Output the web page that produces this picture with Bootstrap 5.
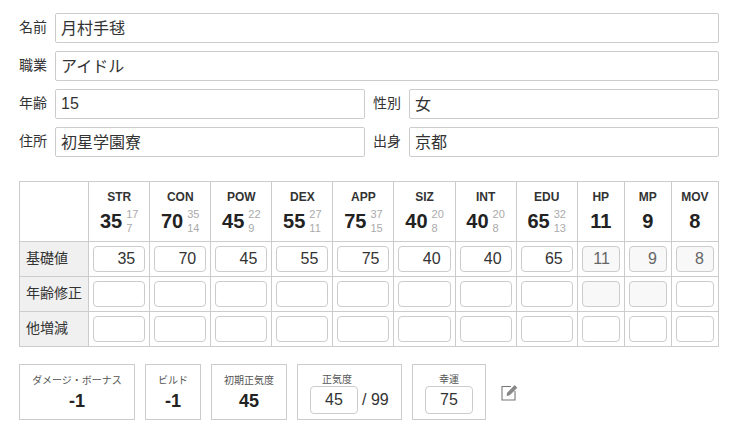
<!DOCTYPE html>
<html lang="ja">
<head>
    <meta charset="UTF-8">
    <meta name="viewport" content="width=device-width, initial-scale=1.0">
    <title>キャラクターシート</title>
    <link href="https://cdn.jsdelivr.net/npm/bootstrap@5.3.0/dist/css/bootstrap.min.css" rel="stylesheet">
    <style>
        body {
            font-family: "Liberation Sans", "Noto Sans CJK JP", sans-serif;
            font-size: 14px;
            color: #333;
            background: #fff;
        }
        .sheet {
            padding: 13px 16px 0 19px;
        }
        .field-row {
            display: flex;
            gap: 8px;
            margin-bottom: 8px;
        }
        .field-name {
            width: 28px;
            flex: none;
            font-size: 14px;
            line-height: 28px;
            white-space: nowrap;
        }
        .field-half {
            display: flex;
            gap: 8px;
            flex: 1 1 0;
        }
        .sheet .form-control {
            height: 30px;
            min-height: 0;
            padding: 0 5px;
            font-size: 16px;
            line-height: 26px;
            color: #333;
            border: 1px solid #ccc;
            border-radius: 2px;
            box-shadow: none;
        }
        .sheet .form-control.cjk-input {
            padding-bottom: 3px;
        }
        .stat-table {
            width: 700px;
            table-layout: fixed;
            border-collapse: collapse;
            margin: 24px 0 17px;
        }
        .stat-table th,
        .stat-table td {
            border: 1px solid #ccc;
            padding: 0;
        }
        .stat-head {
            height: 60px;
            text-align: center;
            vertical-align: top;
            padding-top: 8px !important;
        }
        .stat-code {
            font-size: 12px;
            font-weight: 700;
            line-height: 14px;
            color: #333;
        }
        .stat-nums {
            display: flex;
            justify-content: center;
            align-items: center;
            gap: 4px;
            margin-top: 3px;
            height: 28px;
        }
        .stat-value {
            font-size: 20px;
            font-weight: 700;
            line-height: 28px;
            color: #222;
        }
        .stat-sub {
            font-size: 11px;
            font-weight: 400;
            line-height: 14px;
            color: #aaa;
            text-align: left;
        }
        .stat-table .row-name {
            background: #f0f0f0;
            font-size: 14px;
            font-weight: 400;
            padding: 0 0 2px 6px;
            white-space: nowrap;
        }
        .stat-table td {
            height: 35px;
            padding: 4px;
        }
        .stat-table .form-control {
            display: block;
            height: 26px;
            width: 100%;
            padding: 0 9px 0 0;
            text-align: right;
            font-size: 16px;
            border-radius: 4px;
            line-height: 24px;
        }
        .stat-table .form-control:read-only {
            background: #f8f8f8;
            color: #666;
        }
        .derived-row {
            display: flex;
            align-items: center;
            gap: 10px;
        }
        .derived {
            height: 56px;
            border: 1px solid #ccc;
            text-align: center;
            flex: none;
        }
        .derived-label {
            font-size: 10px;
            line-height: 14px;
            color: #555;
            margin-top: 9px;
        }
        .derived-value {
            font-size: 18px;
            font-weight: 700;
            line-height: 20px;
            color: #222;
            margin-top: 3px;
        }
        .derived-label-tight {
            margin-top: 8px;
            line-height: 13px;
        }
        .derived-input {
            display: flex;
            align-items: center;
            gap: 4px;
            justify-content: flex-start;
            font-size: 16px;
        }
        .sheet .derived-input .form-control {
            width: 48px;
            height: 28px;
            padding: 0;
            text-align: center;
            border-radius: 4px;
            font-size: 16px;
            line-height: 26px;
        }
        .edit-link {
            display: block;
            width: 17px;
            height: 18px;
            margin: 0 0 5px 5px;
        }
    </style>
</head>
<body>
    <div class="sheet">
        <div class="field-row">
            <label class="field-name">名前</label>
            <input type="text" class="form-control cjk-input" value="月村手毬">
        </div>
        <div class="field-row">
            <label class="field-name">職業</label>
            <input type="text" class="form-control cjk-input" value="アイドル">
        </div>
        <div class="field-row">
            <div class="field-half">
                <label class="field-name">年齢</label>
                <input type="text" class="form-control" value="15">
            </div>
            <div class="field-half">
                <label class="field-name">性別</label>
                <input type="text" class="form-control cjk-input" value="女">
            </div>
        </div>
        <div class="field-row">
            <div class="field-half">
                <label class="field-name">住所</label>
                <input type="text" class="form-control cjk-input" value="初星学園寮">
            </div>
            <div class="field-half">
                <label class="field-name">出身</label>
                <input type="text" class="form-control cjk-input" value="京都">
            </div>
        </div>

        <table class="stat-table">
            <colgroup id="statCols"></colgroup>
            <thead><tr id="statHead"></tr></thead>
            <tbody id="statBody"></tbody>
        </table>

        <div class="derived-row">
            <div class="derived" style="width: 116px">
                <div class="derived-label">ダメージ・ボーナス</div>
                <div class="derived-value">-1</div>
            </div>
            <div class="derived" style="width: 56px">
                <div class="derived-label">ビルド</div>
                <div class="derived-value">-1</div>
            </div>
            <div class="derived" style="width: 76px">
                <div class="derived-label">初期正気度</div>
                <div class="derived-value">45</div>
            </div>
            <div class="derived ps-2 pe-2" style="width: 105px">
                <div class="derived-label derived-label-tight text-start ps-3">正気度</div>
                <div class="derived-input ms-1">
                    <input type="text" class="form-control" value="45">
                    <span class="sanity-max">/ 99</span>
                </div>
            </div>
            <div class="derived" style="width: 74px">
                <div class="derived-label derived-label-tight">幸運</div>
                <div class="derived-input justify-content-center">
                    <input type="text" class="form-control" value="75">
                </div>
            </div>
            <a class="edit-link" href="#" aria-label="編集">
                <svg width="17" height="18" viewBox="0 0 17 18" fill="none" stroke="#777" stroke-width="1.1">
                    <path d="M10 3.5H1v13.5h13V8"/>
                    <path d="M6 12.5l.7-2.8L13.7 2.600l2.100 2.100-7 7.100z" fill="#888" stroke-width=".8"/>
                </svg>
            </a>
        </div>
    </div>

    <script>
        const stats = [
            ['STR', 35, 17, 7, 'w', 61], ['CON', 70, 35, 14, 'w', 61], ['POW', 45, 22, 9, 'w', 61],
            ['DEX', 55, 27, 11, 'w', 61], ['APP', 75, 37, 15, 'w', 61], ['SIZ', 40, 20, 8, 'w', 61],
            ['INT', 40, 20, 8, 'w', 61], ['EDU', 65, 32, 13, 'w', 61],
            ['HP', 11, null, null, 'r', 47], ['MP', 9, null, null, 'r', 47], ['MOV', 8, null, null, 'r', 47]
        ];

        // 列幅と見出し
        let cols = '<col style="width: 69px">';
        let head = '<th></th>';
        stats.forEach(s => {
            cols += `<col style="width: ${s[5]}px">`;
            const sub = s[2] === null ? '' : `<div class="stat-sub">${s[2]}<br>${s[3]}</div>`;
            head += `<th class="stat-head"><div class="stat-code">${s[0]}</div><div class="stat-nums"><span class="stat-value">${s[1]}</span>${sub}</div></th>`;
        });
        document.getElementById('statCols').innerHTML = cols;
        document.getElementById('statHead').innerHTML = head;

        // 基礎値 / 年齢修正 / 他増減
        let body = '<tr><th class="row-name">基礎値</th>';
        stats.forEach(s => {
            body += `<td><input type="text" class="form-control" value="${s[1]}"${s[4] === 'r' ? ' readonly' : ''}></td>`;
        });
        body += '</tr><tr><th class="row-name">年齢修正</th>';
        stats.forEach(s => {
            const locked = s[0] === 'HP' || s[0] === 'MP';
            body += `<td><input type="text" class="form-control"${locked ? ' readonly' : ''}></td>`;
        });
        body += '</tr><tr><th class="row-name">他増減</th>';
        stats.forEach(() => {
            body += '<td><input type="text" class="form-control"></td>';
        });
        body += '</tr>';
        document.getElementById('statBody').innerHTML = body;
    </script>

    <script src="https://cdn.jsdelivr.net/npm/bootstrap@5.3.0/dist/js/bootstrap.bundle.min.js"></script>
</body>
</html>
